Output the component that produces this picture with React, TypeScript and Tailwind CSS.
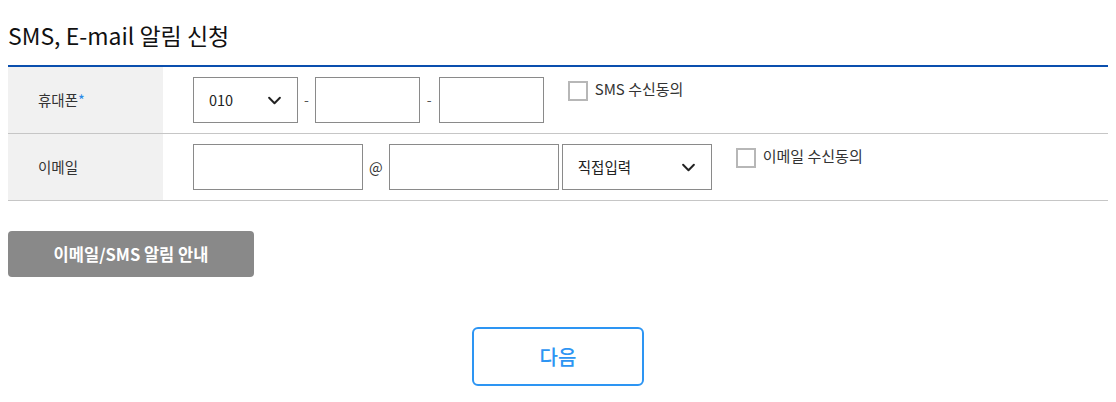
import type { ReactNode } from "react";

const FONT = "font-['Noto_Sans_CJK_KR','Noto_Sans',sans-serif]";

function Chevron() {
  return (
    <svg
      viewBox="0 0 16 10"
      fill="none"
      stroke="currentColor"
      strokeWidth="2.2"
      strokeLinecap="round"
      strokeLinejoin="round"
      className="h-[9px] w-[15px] text-[#222]">
      <path d="M2 2l6 6 6-6" />
    </svg>
  );
}

function Select({ label, width }: { label: string; width: string }) {
  return (
    <div
      className={`${width} flex h-[46px] items-center justify-between border border-[#8a8a8a] bg-white pl-[15px] pr-[15px] text-[14.5px] text-[#222]`}>
      <span>{label}</span>
      <Chevron />
    </div>
  );
}

function Field({ width }: { width: string }) {
  return (
    <input
      type="text"
      className={`${width} h-[46px] border border-[#8a8a8a] bg-white px-3 text-[14px] outline-none`}
    />
  );
}

function Agree({ text }: { text: string }) {
  return (
    <label className="ml-6 mt-[4px] flex cursor-pointer items-center gap-[7px] text-[15px] text-[#333]">
      <span className="block h-5 w-5 border-2 border-[#b7b7b7] bg-white" />
      <span className="-mt-[3px]">{text}</span>
    </label>
  );
}

function Row({ label, children }: { label: ReactNode; children: ReactNode }) {
  return (
    <div className="flex border-b border-[#c6c6c6]">
      <div className="flex w-[155px] items-center bg-[#f1f1f1] pl-[30px] text-[14.5px] text-[#333]">
        {label}
      </div>
      <div className="flex flex-1 items-start py-[10px] pl-[30px]">
        {children}
      </div>
    </div>
  );
}

export default function App() {
  return (
    <div className={`${FONT} bg-white px-2 text-[#111]`}>
      <h2 className="pt-[18px] pb-[13px] text-[23px] leading-[34px] font-normal text-[#111]">
        SMS, E-mail 알림 신청
      </h2>

      <div className="border-t-2 border-[#0a4fae]">
        <Row
          label={
            <span>
              휴대폰<span className="text-[#2a8be8]">*</span>
            </span>
          }>
          <Select label="010" width="w-[105px]" />
          <span className="mx-[6px] mt-[12px] text-[14px] text-[#555]">-</span>
          <Field width="w-[105px]" />
          <span className="mx-[7px] mt-[12px] text-[14px] text-[#555]">-</span>
          <Field width="w-[105px]" />
          <Agree text="SMS 수신동의" />
        </Row>
        <Row label="이메일">
          <Field width="w-[170px]" />
          <span className="ml-[6px] mr-[6px] mt-[12px] text-[14.5px] text-[#333]">@</span>
          <Field width="w-[170px]" />
          <div className="ml-[3px]">
            <Select label="직접입력" width="w-[150px]" />
          </div>
          <Agree text="이메일 수신동의" />
        </Row>
      </div>

      <button
        type="button"
        className="mt-[30px] flex h-[46px] w-[246px] items-center justify-center rounded-[4px] bg-[#898989] text-[16.5px] font-bold text-white">
        이메일/SMS 알림 안내
      </button>

      <div className="mt-[50px] flex justify-center pb-4">
        <button
          type="button"
          className="flex h-[59px] w-[172px] items-center justify-center rounded-[6px] border-2 border-[#2d95f3] bg-white text-[20px] font-medium text-[#2d95f3]">
          다음
        </button>
      </div>
    </div>
  );
}
